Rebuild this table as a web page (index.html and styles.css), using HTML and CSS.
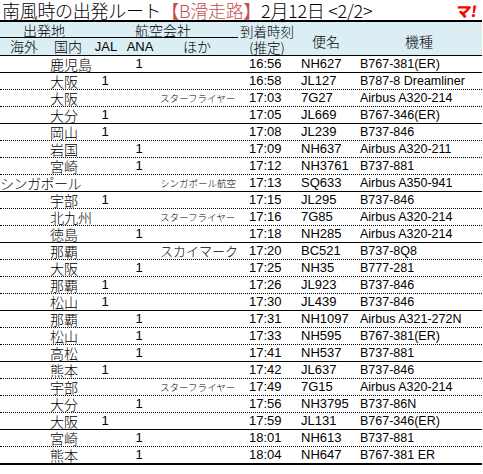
FILE: index.html
```html
<!DOCTYPE html>
<html lang="ja">
<head>
<meta charset="utf-8">
<link rel="stylesheet" href="styles.css">
</head>
<body>
<div class="sheet">
  <div class="title">
    <span>南風時の出発ルート</span><span class="red">【B滑走路】</span><span>2月12日 &lt;2/2&gt;</span>
    <span class="logo">マ!</span>
  </div>
  <div class="head">
    <div class="h-dep">出発地</div>
    <div class="h-air">航空会社</div>
    <div class="h-time">到着時刻<br>(推定)</div>
    <div class="h-flt">便名</div>
    <div class="h-type">機種</div>
    <div class="h-sub h-c1">海外</div>
    <div class="h-sub h-c2">国内</div>
    <div class="h-sub h-c3">JAL</div>
    <div class="h-sub h-c4">ANA</div>
    <div class="h-sub h-c5">ほか</div>
  </div>
  <div class="rows">
    <div class="row solid"><span class="city">鹿児島</span><span class="jal"></span><span class="ana">1</span><span class="oth"></span><span class="tm">16:56</span><span class="fl">NH627</span><span class="ty">B767-381(ER)</span></div>
    <div class="row"><span class="city">大阪</span><span class="jal">1</span><span class="ana"></span><span class="oth"></span><span class="tm">16:58</span><span class="fl">JL127</span><span class="ty">B787-8 Dreamliner</span></div>
    <div class="row"><span class="city">大阪</span><span class="jal"></span><span class="ana"></span><span class="oth sm">スターフライヤー</span><span class="tm">17:03</span><span class="fl">7G27</span><span class="ty">Airbus A320-214</span></div>
    <div class="row solid"><span class="city">大分</span><span class="jal">1</span><span class="ana"></span><span class="oth"></span><span class="tm">17:05</span><span class="fl">JL669</span><span class="ty">B767-346(ER)</span></div>
    <div class="row"><span class="city">岡山</span><span class="jal">1</span><span class="ana"></span><span class="oth"></span><span class="tm">17:08</span><span class="fl">JL239</span><span class="ty">B737-846</span></div>
    <div class="row"><span class="city">岩国</span><span class="jal"></span><span class="ana">1</span><span class="oth"></span><span class="tm">17:09</span><span class="fl">NH637</span><span class="ty">Airbus A320-211</span></div>
    <div class="row"><span class="city">宮崎</span><span class="jal"></span><span class="ana">1</span><span class="oth"></span><span class="tm">17:12</span><span class="fl">NH3761</span><span class="ty">B737-881</span></div>
    <div class="row solid"><span class="intl">シンガポール</span><span class="jal"></span><span class="ana"></span><span class="oth sm">シンガポール航空</span><span class="tm">17:13</span><span class="fl">SQ633</span><span class="ty">Airbus A350-941</span></div>
    <div class="row"><span class="city">宇部</span><span class="jal">1</span><span class="ana"></span><span class="oth"></span><span class="tm">17:15</span><span class="fl">JL295</span><span class="ty">B737-846</span></div>
    <div class="row"><span class="city">北九州</span><span class="jal"></span><span class="ana"></span><span class="oth sm">スターフライヤー</span><span class="tm">17:16</span><span class="fl">7G85</span><span class="ty">Airbus A320-214</span></div>
    <div class="row solid"><span class="city">徳島</span><span class="jal"></span><span class="ana">1</span><span class="oth"></span><span class="tm">17:18</span><span class="fl">NH285</span><span class="ty">Airbus A320-214</span></div>
    <div class="row"><span class="city">那覇</span><span class="jal"></span><span class="ana"></span><span class="oth">スカイマーク</span><span class="tm">17:20</span><span class="fl">BC521</span><span class="ty">B737-8Q8</span></div>
    <div class="row"><span class="city">大阪</span><span class="jal"></span><span class="ana">1</span><span class="oth"></span><span class="tm">17:25</span><span class="fl">NH35</span><span class="ty">B777-281</span></div>
    <div class="row"><span class="city">那覇</span><span class="jal">1</span><span class="ana"></span><span class="oth"></span><span class="tm">17:26</span><span class="fl">JL923</span><span class="ty">B737-846</span></div>
    <div class="row solid"><span class="city">松山</span><span class="jal">1</span><span class="ana"></span><span class="oth"></span><span class="tm">17:30</span><span class="fl">JL439</span><span class="ty">B737-846</span></div>
    <div class="row"><span class="city">那覇</span><span class="jal"></span><span class="ana">1</span><span class="oth"></span><span class="tm">17:31</span><span class="fl">NH1097</span><span class="ty">Airbus A321-272N</span></div>
    <div class="row"><span class="city">松山</span><span class="jal"></span><span class="ana">1</span><span class="oth"></span><span class="tm">17:33</span><span class="fl">NH595</span><span class="ty">B767-381(ER)</span></div>
    <div class="row solid"><span class="city">高松</span><span class="jal"></span><span class="ana">1</span><span class="oth"></span><span class="tm">17:41</span><span class="fl">NH537</span><span class="ty">B737-881</span></div>
    <div class="row"><span class="city">熊本</span><span class="jal">1</span><span class="ana"></span><span class="oth"></span><span class="tm">17:42</span><span class="fl">JL637</span><span class="ty">B737-846</span></div>
    <div class="row"><span class="city">宇部</span><span class="jal"></span><span class="ana"></span><span class="oth sm">スターフライヤー</span><span class="tm">17:49</span><span class="fl">7G15</span><span class="ty">Airbus A320-214</span></div>
    <div class="row"><span class="city">大分</span><span class="jal"></span><span class="ana">1</span><span class="oth"></span><span class="tm">17:56</span><span class="fl">NH3795</span><span class="ty">B737-86N</span></div>
    <div class="row solid"><span class="city">大阪</span><span class="jal">1</span><span class="ana"></span><span class="oth"></span><span class="tm">17:59</span><span class="fl">JL131</span><span class="ty">B767-346(ER)</span></div>
    <div class="row"><span class="city">宮崎</span><span class="jal"></span><span class="ana">1</span><span class="oth"></span><span class="tm">18:01</span><span class="fl">NH613</span><span class="ty">B737-881</span></div>
    <div class="row thick"><span class="city">熊本</span><span class="jal"></span><span class="ana">1</span><span class="oth"></span><span class="tm">18:04</span><span class="fl">NH647</span><span class="ty">B767-381 ER</span></div>
  </div>
</div>
</body>
</html>
```

FILE: styles.css
```css
html, body {
  margin: 0;
  padding: 0;
  background: #ffffff;
}
body {
  font-family: "Noto Sans CJK JP", sans-serif;
  font-weight: 300;
  color: #000;
}
.sheet {
  width: 482px;
}
.title {
  height: 22px;
  box-sizing: border-box;
  padding-top: 1px;
  border-bottom: 2px solid #000;
  display: flex;
  align-items: flex-start;
  font-size: 18px;
  line-height: 19px;
  padding-left: 2px;
  letter-spacing: -0.3px;
  white-space: nowrap;
}
.title .red {
  color: #c0504d;
}
.title .logo {
  margin-left: auto;
  margin-right: 5px;
  margin-top: 3px;
  color: #ff0000;
  font-weight: 900;
  font-size: 15px;
  line-height: 14px;
  letter-spacing: 0;
  transform: skewX(-8deg);
}
.head {
  display: grid;
  grid-template-columns: 48px 40px 34px 34px 82px 58px 60px 1fr;
  grid-template-rows: 16px 17px;
  background: #daeef3;
  border-bottom: 1px solid #000;
  font-size: 14px;
  line-height: 16px;
}
.head > div {
  text-align: center;
  white-space: nowrap;
}
.h-dep { grid-column: 1 / 3; grid-row: 1; border-bottom: 1px solid #000; }
.h-air { grid-column: 3 / 6; grid-row: 1; border-bottom: 1px solid #000; }
.h-time { grid-column: 6; grid-row: 1 / 3; font-size: 13.5px; line-height: 16px; margin-top: 1px; }
.h-flt, .h-type { grid-row: 1 / 3; align-self: center; padding-top: 4px; }
.h-flt { grid-column: 7; }
.h-type { grid-column: 8; }
.h-sub { grid-row: 2; line-height: 17px; }
.h-c1 { grid-column: 1; }
.h-c2 { grid-column: 2; }
.h-c3 { grid-column: 3; font-family: "Liberation Sans", sans-serif; font-weight: 400; font-size: 13px; padding-left: 2px; }
.h-c4 { grid-column: 4; font-family: "Liberation Sans", sans-serif; font-weight: 400; font-size: 13px; padding-left: 2px; }
.h-c5 { grid-column: 5; }
.row {
  display: grid;
  grid-template-columns: 48px 40px 34px 34px 82px 58px 60px 1fr;
  height: 17px;
  box-sizing: border-box;
  border-bottom: 1px dotted #000;
  font-size: 14px;
  line-height: 16px;
  white-space: nowrap;
}
.row.solid { border-bottom: 1px solid #000; }
.row.thick { border-bottom: 2px solid #000; height: 18px; }
.city { grid-column: 2; padding-left: 2px; }
.intl { grid-column: 1 / 3; letter-spacing: -0.5px; }
.jal, .ana {
  text-align: center;
  font-family: "Liberation Sans", sans-serif;
  font-weight: 400;
  font-size: 13px;
}
.jal { grid-column: 3; }
.ana { grid-column: 4; }
.oth { grid-column: 5; padding-left: 4px; font-size: 13px; }
.oth.sm { font-size: 9.5px; }
.tm, .fl, .ty {
  font-family: "Liberation Sans Narrow", "Liberation Sans", sans-serif;
  font-weight: 400;
  font-size: 13px;
}
.tm { grid-column: 6; padding-left: 11px; }
.fl { grid-column: 7; padding-left: 5px; }
.ty { grid-column: 8; padding-left: 4px; font-family: "Liberation Sans", sans-serif; font-size: 12.5px; }
```
